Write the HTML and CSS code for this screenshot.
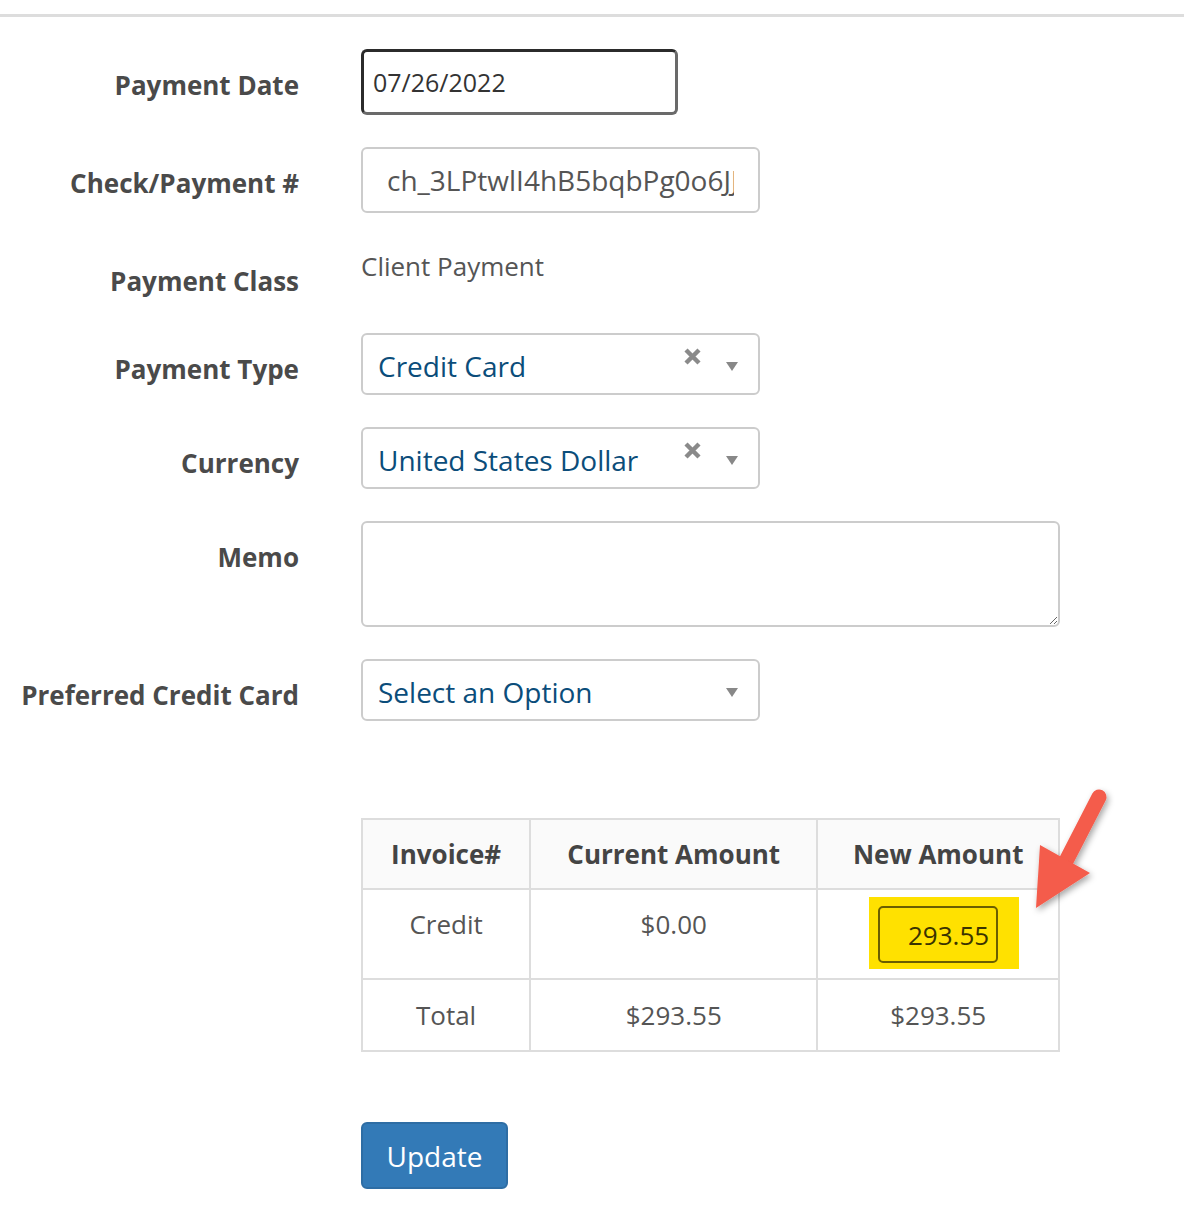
FILE: index.html
```html
<!DOCTYPE html>
<html>
<head>
<meta charset="utf-8">
<link rel="stylesheet" href="styles.css">
</head>
<body>
<div class="topline"></div>
<form class="form">
  <div class="row">
    <label class="label">Payment Date</label>
    <input class="input date" type="text" value="07/26/2022">
  </div>
  <div class="row">
    <label class="label">Check/Payment #</label>
    <input class="input check" type="text" value="ch_3LPtwlI4hB5bqbPg0o6JJ8xQ2">
  </div>
  <div class="row row-static">
    <label class="label">Payment Class</label>
    <div class="static">Client Payment</div>
  </div>
  <div class="row">
    <label class="label">Payment Type</label>
    <div class="select">
      <span class="select-text">Credit Card</span>
      <svg class="clear" width="17" height="17" viewBox="0 0 17 17"><path d="M2 2L15 15M15 2L2 15" stroke="#8a8a8a" stroke-width="4.4"/></svg>
      <svg class="caret" width="12" height="9" viewBox="0 0 12 9"><path d="M0 0H12L6 9Z" fill="#888"/></svg>
    </div>
  </div>
  <div class="row">
    <label class="label">Currency</label>
    <div class="select">
      <span class="select-text">United States Dollar</span>
      <svg class="clear" width="17" height="17" viewBox="0 0 17 17"><path d="M2 2L15 15M15 2L2 15" stroke="#8a8a8a" stroke-width="4.4"/></svg>
      <svg class="caret" width="12" height="9" viewBox="0 0 12 9"><path d="M0 0H12L6 9Z" fill="#888"/></svg>
    </div>
  </div>
  <div class="row">
    <label class="label">Memo</label>
    <textarea class="memo"></textarea>
  </div>
  <div class="row">
    <label class="label">Preferred Credit Card</label>
    <div class="select">
      <span class="select-text">Select an Option</span>
      <svg class="caret" width="12" height="9" viewBox="0 0 12 9"><path d="M0 0H12L6 9Z" fill="#888"/></svg>
    </div>
  </div>

  <div class="table-wrap">
    <table class="amounts">
      <thead>
        <tr><th class="c1">Invoice#</th><th class="c2">Current Amount</th><th class="c3">New Amount</th></tr>
      </thead>
      <tbody>
        <tr>
          <td>Credit</td>
          <td>$0.00</td>
          <td class="new-cell"><span class="highlight"><span class="amount-input">293.55</span></span></td>
        </tr>
        <tr>
          <td>Total</td>
          <td>$293.55</td>
          <td>$293.55</td>
        </tr>
      </tbody>
    </table>
    <svg class="arrow" width="110" height="140" viewBox="0 0 110 140">
      <defs>
        <filter id="sh" x="-30%" y="-30%" width="160%" height="160%">
          <feDropShadow dx="2" dy="3" stdDeviation="3" flood-color="#000" flood-opacity="0.35"/>
        </filter>
      </defs>
      <g filter="url(#sh)">
        <path d="M79 17 L44 85" stroke="#f45b4b" stroke-width="15" stroke-linecap="round" fill="none"/>
        <path d="M20 65 L16 128 L70 93 Z" fill="#f45b4b"/>
      </g>
    </svg>
  </div>

  <div class="actions">
    <button type="button" class="btn">Update</button>
  </div>
</form>
</body>
</html>
```

FILE: styles.css
```css
html, body {
  margin: 0;
  padding: 0;
  background: #fff;
}
body {
  font-family: "Open Sans", "Liberation Sans", sans-serif;
  color: #555;
}
.topline {
  margin-top: 14px;
  height: 3px;
  background: #dddddd;
}
.form {
  padding-top: 32px;
}
.row {
  display: flex;
  align-items: flex-start;
  margin-bottom: 32px;
}
.label {
  width: 299px;
  margin-right: 62px;
  text-align: right;
  font-weight: 700;
  font-size: 26px;
  line-height: 36px;
  padding-top: 18px;
  color: #4a4a4a;
  flex-shrink: 0;
}
.input {
  box-sizing: border-box;
  font-family: "Open Sans", "Liberation Sans", sans-serif;
  font-size: 26px;
  color: #555;
  outline: none;
  margin: 0;
  background: #fff;
}
.date {
  width: 317px;
  height: 66px;
  border: 3px solid #2b2b2b;
  border-bottom-color: #6a6a6a;
  border-right-color: #6a6a6a;
  border-radius: 6px;
  padding: 0 9px;
  color: #333;
  font-size: 25px;
}
.check {
  width: 399px;
  height: 66px;
  border: 2px solid #cccccc;
  border-radius: 6px;
  padding: 0 24px;
  font-size: 28px;
}
.row-static {
  height: 56px;
}
.static {
  font-size: 26px;
  line-height: 36px;
  padding-top: 3px;
  color: #555;
}
.select {
  box-sizing: border-box;
  width: 399px;
  height: 62px;
  border: 2px solid #cccccc;
  border-radius: 6px;
  display: flex;
  align-items: center;
  padding-left: 15px;
  padding-right: 20px;
}
.select-text {
  flex: 1;
  font-size: 28px;
  color: #0b4d7a;
  line-height: 36px;
  padding-top: 3px;
}
.clear {
  align-self: flex-start;
  margin-top: 13px;
  margin-right: 25px;
}
.caret {
  margin-top: 4px;
}
.memo {
  box-sizing: border-box;
  width: 699px;
  height: 106px;
  border: 2px solid #cccccc;
  border-radius: 6px;
  margin: 0;
  padding: 10px;
  font-family: "Open Sans", "Liberation Sans", sans-serif;
  font-size: 26px;
  resize: vertical;
  outline: none;
}
.table-wrap {
  position: relative;
  margin-top: 97px;
  margin-left: 361px;
  width: 699px;
}
.amounts {
  border-collapse: collapse;
  width: 699px;
  font-size: 26px;
  color: #555;
}
.amounts th, .amounts td {
  border: 2px solid #dddddd;
  text-align: center;
  vertical-align: top;
  line-height: 36px;
  padding: 16px 10px;
}
.amounts th {
  background: #fafafa;
  font-weight: 700;
  color: #444;
  font-size: 26px;
}
.amounts tbody tr:last-child td {
  padding-top: 17px;
  padding-bottom: 17px;
}
.c1 { width: 147px; }
.c2 { width: 269px; }
.c3 { width: 221px; }
.new-cell {
  padding-top: 7px !important;
  padding-bottom: 9px !important;
}
.highlight {
  display: inline-block;
  background: #ffe100;
  padding: 9px 21px 6px 9px;
  margin-left: 12px;
}
.amount-input {
  display: block;
  box-sizing: border-box;
  width: 120px;
  height: 57px;
  border: 2px solid #6b5e00;
  border-radius: 5px;
  text-align: right;
  padding-right: 7px;
  line-height: 55px;
  color: #3a3300;
  font-size: 26px;
}
.arrow {
  position: absolute;
  left: 659px;
  top: -38px;
}
.actions {
  margin-top: 70px;
  margin-left: 361px;
}
.btn {
  box-sizing: border-box;
  width: 147px;
  height: 67px;
  background: #337ab7;
  border: 2px solid #2e6da4;
  border-radius: 6px;
  color: #fff;
  font-family: "Open Sans", "Liberation Sans", sans-serif;
  font-size: 28px;
  padding: 0;
  cursor: pointer;
}
```
